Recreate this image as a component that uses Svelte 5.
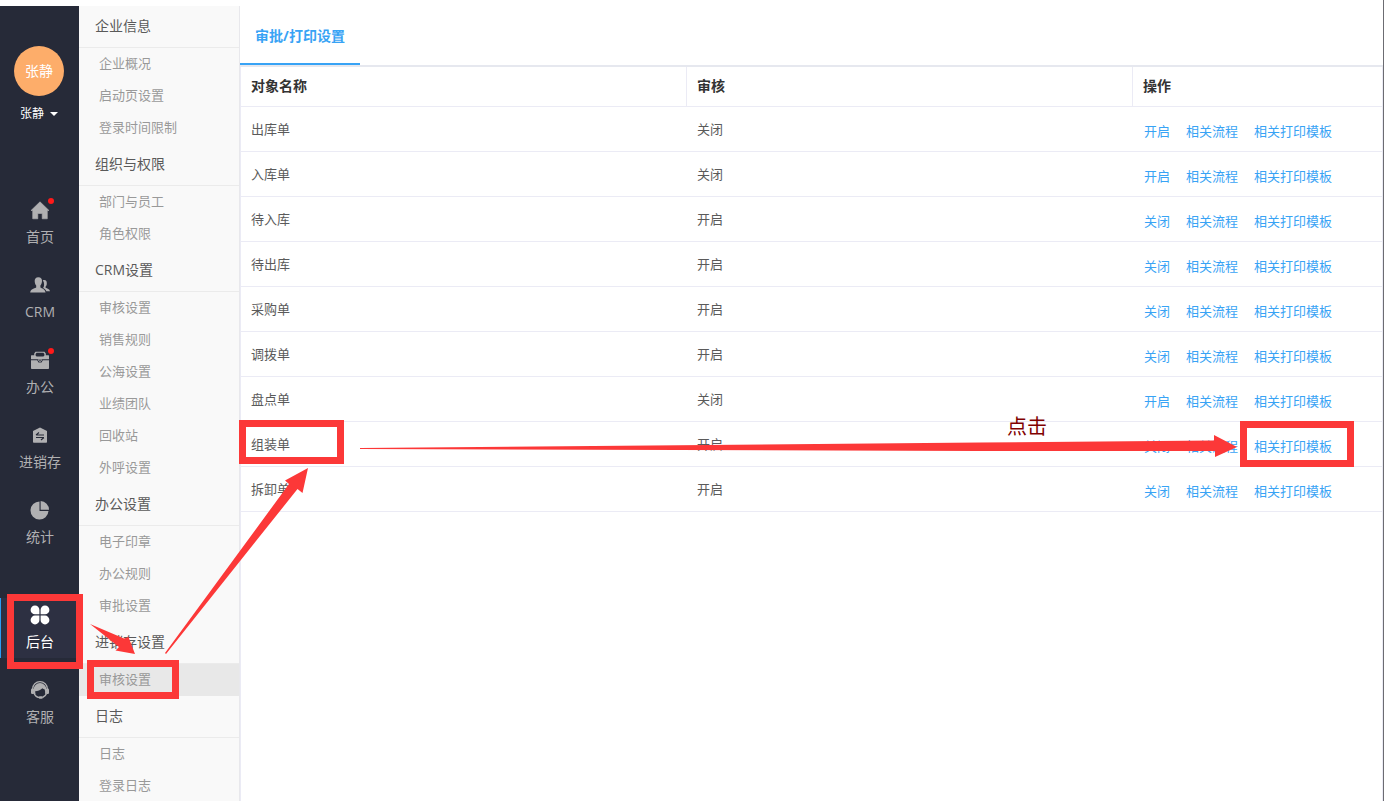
<script>
  let activeNav = $state("admin");
  let activeMenu = $state("进销存设置/审核设置");

  const navItems = [
    { id: "home", label: "首页", badge: true },
    { id: "crm", label: "CRM" },
    { id: "office", label: "办公", badge: true },
    { id: "stock", label: "进销存" },
    { id: "stats", label: "统计" },
    { id: "admin", label: "后台", spaced: true },
    { id: "service", label: "客服" },
  ];

  const menuGroups = [
    { title: "企业信息", items: ["企业概况", "启动页设置", "登录时间限制"] },
    { title: "组织与权限", items: ["部门与员工", "角色权限"] },
    {
      title: "CRM设置",
      items: ["审核设置", "销售规则", "公海设置", "业绩团队", "回收站", "外呼设置"],
    },
    { title: "办公设置", items: ["电子印章", "办公规则", "审批设置"] },
    { title: "进销存设置", items: ["审核设置"] },
    { title: "日志", items: ["日志", "登录日志"] },
  ];

  let rows = $state([
    { name: "出库单", enabled: false },
    { name: "入库单", enabled: false },
    { name: "待入库", enabled: true },
    { name: "待出库", enabled: true },
    { name: "采购单", enabled: true },
    { name: "调拨单", enabled: true },
    { name: "盘点单", enabled: false },
    { name: "组装单", enabled: true },
    { name: "拆卸单", enabled: true },
  ]);

  function toggleRow(row) {
    row.enabled = !row.enabled;
  }
</script>

<div class="page">
  <nav class="sidebar">
    <div class="avatar">张静</div>
    <button type="button" class="user-name">
      张静
      <span class="caret"></span>
    </button>

    <div class="nav-list">
      {#each navItems as item}
        <a
          href="#{item.id}"
          class="nav-item"
          class:active={item.id === activeNav}
          class:spaced={item.spaced}
          onclick={() => (activeNav = item.id)}
        >
          <span class="nav-icon">
            <svg width="20" height="20" viewBox="0 0 20 20" fill="currentColor" aria-hidden="true">
              {#if item.id === "home"}
                <path d="M10 1.800 19 10.500H17.300V18.800H12.200V13.500H7.800V18.800H2.700V10.500H1Z" stroke="currentColor" stroke-width=".6" stroke-linejoin="round" />
              {:else if item.id === "crm"}
                <path d="M12.800 5.200c2.800-1 4.200.6 4 3.200 0 1.800-.7 2.600-1.200 3.200v1.200c1.600.9 4 1 4.400 3.400h-3.700c-.6-1.800-2-2.500-3.200-3.200 1.300-2 1.500-5-.3-7.800Z" />
                <path d="M8.300 2.200c2.800 0 3.900 1.700 3.700 4.100-.1 2-.8 3.300-1.600 4.200v1.900c1.400 1 4.800 1.400 5.200 5.200H.2c.2-3.600 3.600-4 6-5.200v-1.900C5.300 9.600 4.800 8.300 4.700 6.300 4.500 3.900 5.700 2.200 8.300 2.200Z" />
              {:else if item.id === "office"}
                <path fill-rule="evenodd" d="M5.500 1.800h9l1.300 1.800v1.600h2.700q.5 0 .5.500V9.200H1V5.700Q1 5.200 1.500 5.200h2.700V3.600ZM6.600 2.800 5.600 4v1.600l1 .9h6.800l1-.9V4L13.400 2.800Z" />
                <path d="M1 10.200h6.200l1.300 2.300h3l1.300-2.300H19v8q0 .7-.8.700H1.800Q1 18.900 1 18.200Z" />
                <path d="M8.300 9.200h3.400v1.600L10 12 8.300 10.800Z" />
                <circle cx="10" cy="10.300" r=".8" fill="#262a38" />
              {:else if item.id === "stock"}
                <path d="M10 2.500 17 6v11q0 .8-.8.800H3.800Q3 17.800 3 17V6Z" />
                <path d="M6 10h8M6 10l3-2.500M14 12.500H6M14 12.500l-3 2.500" fill="none" stroke="#262a38" stroke-width="1.100" />
              {:else if item.id === "stats"}
                <path d="M9.500 1.500V11H18.500A9 9 0 1 1 9.500 1.500Z" />
                <path d="M10.600 1A8.700 8.700 0 0 1 19 9.700H10.600Z" />
              {:else if item.id === "admin"}
                <path d="M5 .5a4.400 4.400 0 0 1 4.400 4.400v4.400H5A4.400 4.400 0 0 1 5 .5ZM15 .5a4.400 4.400 0 0 1 0 8.800h-4.400V4.900A4.400 4.400 0 0 1 15 .5ZM5 10.600h4.400V15A4.400 4.400 0 1 1 5 10.600ZM10.600 10.600H15A4.400 4.400 0 1 1 10.600 15Z" />
              {:else}
                <path d="M2.600 9a7.400 7.400 0 0 1 14.800 0" fill="none" stroke="currentColor" stroke-width="1.200" />
                <path d="M3.600 13.500V9.500a6.400 6.400 0 0 1 12.800 0v4l-1.400.5c.3-1.500.2-3-.3-4.500-.8-.1-1.700-.6-2.300-1.200-2 2-4.700 2.800-7.200 3 0 1 .1 1.900.4 2.700Z" />
                <rect x="1" y="8.500" width="3.200" height="5.500" rx="1.200" />
                <rect x="15.800" y="8.500" width="3.200" height="5.500" rx="1.200" />
                <path d="M4 13c1 3.200 3.500 4.600 6 4.600M16.500 13.500c-.7 2-2 3.200-4 4" fill="none" stroke="currentColor" stroke-width="1.400" />
                <rect x="8.800" y="16.200" width="4" height="2.600" rx="1.200" />
              {/if}
            </svg>
            {#if item.badge}<span class="dot"></span>{/if}
          </span>
          {item.label}
        </a>
      {/each}
    </div>
  </nav>

  <aside class="submenu">
    {#each menuGroups as group}
      <h2 class="menu-title">{group.title}</h2>
      {#each group.items as item}
        {@const key = `${group.title}/${item}`}
        <a
          href="#settings"
          class="menu-item"
          class:active={key === activeMenu}
          onclick={() => (activeMenu = key)}
        >
          {item}
        </a>
      {/each}
    {/each}
  </aside>

  <main class="main">
    <div class="tabs">
      <button type="button" class="tab">审批/打印设置</button>
    </div>

    <div class="table-wrap">
      <table>
        <colgroup>
          <col />
          <col />
          <col class="col-actions" />
        </colgroup>
        <thead>
          <tr>
            <th>对象名称</th>
            <th>审核</th>
            <th>操作</th>
          </tr>
        </thead>
        <tbody>
          {#each rows as row}
            <tr>
              <td>{row.name}</td>
              <td>{row.enabled ? "开启" : "关闭"}</td>
              <td class="actions-cell">
                <div class="actions">
                  <button type="button" class="link" onclick={() => toggleRow(row)}>
                    {row.enabled ? "关闭" : "开启"}
                  </button>
                  <a class="link" href="#flow">相关流程</a>
                  <a class="link" href="#template">相关打印模板</a>
                </div>
              </td>
            </tr>
          {/each}
        </tbody>
      </table>
    </div>
  </main>

  <!-- Guide marks: highlighted boxes joined by arrows -->
  <svg class="guide" width="1384" height="801" viewBox="0 0 1384 801">
    <g fill="none" stroke="#fc3838" stroke-width="7">
      <rect x="10.500" y="597.500" width="69" height="68" />
      <rect x="90.500" y="663.500" width="85" height="32" />
      <rect x="242.500" y="423.500" width="98" height="37" />
      <rect x="1243.500" y="424.500" width="107" height="39" />
    </g>
    <g fill="#fc3838">
      <path d="M90 624 124 638.500 128.500 637 135 654 115.500 650.500 119 647Z" />
      <path d="M165 653 289 484 285 480.500 308 468 302.500 493 297.500 489 166 654Z" />
      <path d="M360 448 980 442.500 1214 440.500V435L1237 447 1215 457V451L980 451 360 449Z" />
    </g>
  </svg>
  <span class="guide-text">点击</span>
</div>

<style>
  :global(body) {
    margin: 0;
    background: #fff;
  }

  .page {
    position: relative;
    display: flex;
    box-sizing: border-box;
    height: 100vh;
    padding-top: 6px;
    border-right: 1px solid #6c6c72;
    overflow: hidden;
    font-family: "Open Sans", "Noto Sans CJK SC", sans-serif;
    font-size: 13px;
    color: #5a5a5a;
  }

  a {
    text-decoration: none;
  }

  button {
    padding: 0;
    border: none;
    background: none;
    font-family: inherit;
    cursor: pointer;
  }

  /* Dark navigation */
  .sidebar {
    flex: 0 0 79px;
    display: flex;
    flex-direction: column;
    box-sizing: border-box;
    padding-top: 40px;
    background: #262a38;
  }

  .avatar {
    width: 50px;
    height: 50px;
    margin-left: 14px;
    border-radius: 50%;
    background: #fdad6a;
    color: #fff;
    font-size: 14px;
    line-height: 50px;
    text-align: center;
  }

  .user-name {
    display: flex;
    align-items: center;
    gap: 6px;
    margin-top: 8px;
    margin-left: 20px;
    color: #fff;
    font-size: 12px;
    line-height: 20px;
  }

  .caret {
    border: 4px solid transparent;
    border-top-color: #fff;
    border-bottom: none;
  }

  .nav-list {
    display: flex;
    flex-direction: column;
    gap: 15px;
    margin-top: 69px;
  }

  .nav-item {
    display: flex;
    flex-direction: column;
    align-items: center;
    gap: 7px;
    box-sizing: border-box;
    height: 60px;
    padding-top: 7px;
    border-left: 1px solid transparent;
    color: #b0b0b2;
    font-size: 14px;
    line-height: 20px;
  }

  .nav-item.spaced {
    margin-top: 30px;
  }

  .nav-item.active {
    border-left-color: #2b9df4;
    background: #2d3042;
    color: #fff;
  }

  .nav-icon {
    position: relative;
    width: 20px;
    height: 20px;
  }

  .nav-icon svg {
    display: block;
  }

  .dot {
    position: absolute;
    top: -2px;
    right: -4px;
    width: 6px;
    height: 6px;
    border-radius: 50%;
    background: #ff1a1a;
  }

  /* Settings menu */
  .submenu {
    flex: 0 0 160px;
    background: #f9f9f9;
    border-right: 1px solid #e8e8ec;
  }

  .menu-title {
    box-sizing: border-box;
    height: 42px;
    margin: 0;
    padding-left: 16px;
    border-bottom: 1px solid #ebebeb;
    color: #5a5a5a;
    font-size: 14px;
    font-weight: 400;
    line-height: 40px;
  }

  .menu-item {
    display: block;
    box-sizing: border-box;
    height: 32px;
    padding-left: 20px;
    color: #999;
    line-height: 30px;
  }

  .menu-item.active {
    background: #e8e8e8;
  }

  /* Content */
  .main {
    flex: 1;
    min-width: 0;
    display: flex;
    flex-direction: column;
  }

  .tabs {
    display: flex;
    height: 59px;
    border-bottom: 2px solid #e6e8ef;
  }

  .tab {
    box-sizing: border-box;
    width: 120px;
    border-bottom: 2px solid #38a3f5;
    color: #38a3f5;
    font-size: 14px;
    font-weight: 700;
  }

  .table-wrap {
    flex: 1;
    border: 1px solid #ebebf5;
    border-width: 0 1px;
  }

  table {
    width: 100%;
    table-layout: fixed;
    border-collapse: separate;
    border-spacing: 0;
  }

  .col-actions {
    width: 249px;
  }

  th,
  td {
    box-sizing: border-box;
    padding: 0 10px;
    border-bottom: 1px solid #ebebf5;
    text-align: left;
  }

  th {
    height: 40px;
    padding-bottom: 2px;
    border-right: 1px solid #ebebf5;
    color: #333;
    font-size: 14px;
    line-height: 20px;
  }

  th:last-child {
    border-right: none;
  }

  td {
    height: 45px;
    line-height: 20px;
  }

  .actions-cell {
    padding: 4px 10px 0 11px;
  }

  .actions {
    display: flex;
    gap: 16px;
  }

  .link {
    color: #38a3f5;
    font-size: 13px;
    line-height: 20px;
  }

  .guide {
    position: absolute;
    top: 0;
    left: 0;
    pointer-events: none;
  }

  .guide-text {
    position: absolute;
    top: 412px;
    left: 1007px;
    color: #800000;
    font-size: 20px;
    line-height: 30px;
  }
</style>
